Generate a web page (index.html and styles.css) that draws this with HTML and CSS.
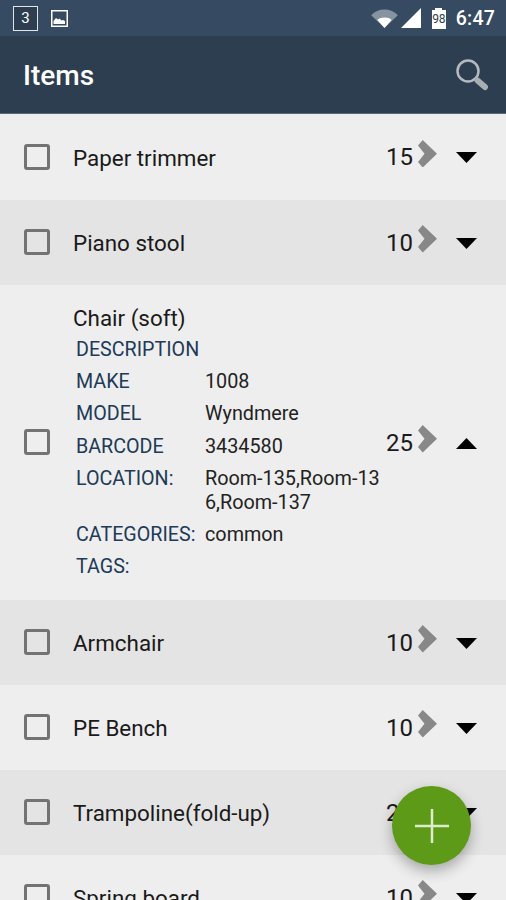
FILE: index.html
```html
<!DOCTYPE html>
<html lang="en">
<head>
<meta charset="utf-8">
<title>Items</title>
<link rel="stylesheet" href="styles.css">
</head>
<body>
<div class="screen">
  <div class="status">
    <div class="status-left">
      <span class="badge">3</span>
      <svg class="pic" viewBox="0 0 17 17"><rect x="0.75" y="0.75" width="15.5" height="15.5" fill="none" stroke="#fff" stroke-width="1.5"/><path d="M2.5 14v-3l2.5-3 2 1.5 1.5-1 2 2 1.5-.5 2 1V14z" fill="#fff"/></svg>
    </div>
    <div class="status-right">
      <svg class="wifi" viewBox="0 0 28 20"><path d="M0 6.5C3.5 2.5 8.5 0.5 14 0.5s10.500 2 14 6L14 20z" fill="#fff" opacity=".4"/><path d="M6.500 11.500C8.500 9.800 11 9 14 9s5.500.8 7.500 2.500L14 20z" fill="#fff"/></svg>
      <svg class="signal" viewBox="0 0 20 20"><path d="M20 0v20H0z" fill="#fff"/></svg>
      <span class="battery"><span class="battery-cap"></span><span class="battery-body">98</span></span>
      <span class="clock">6:47</span>
    </div>
  </div>
  <header class="bar">
    <h1 class="title">Items</h1>
    <svg class="search" viewBox="0 0 32 32"><circle cx="12" cy="12" r="10.500" fill="none" stroke="#b4babf" stroke-width="2.500"/><path d="M21.500 21.500l7.500 6.500" stroke="#a9aeb3" stroke-width="6" stroke-linecap="round"/></svg>
  </header>
  <main class="list">
    <div class="row">
      <span class="check"></span><div class="body"><div class="name">Paper trimmer</div></div>
      <span class="count">15</span><svg class="chev" viewBox="0 0 19 27.500"><path d="M0 5.500L4.700 0 19 13.750 4.700 27.500 0 22l6.500-8.250z" fill="#888"/></svg>
      <svg class="tri" viewBox="0 0 21 11"><path d="M0 0h21L10.500 11z"/></svg>
    </div>
    <div class="row alt">
      <span class="check"></span><div class="body"><div class="name">Piano stool</div></div>
      <span class="count">10</span><svg class="chev" viewBox="0 0 19 27.500"><path d="M0 5.500L4.700 0 19 13.750 4.700 27.500 0 22l6.500-8.250z" fill="#888"/></svg>
      <svg class="tri" viewBox="0 0 21 11"><path d="M0 0h21L10.500 11z"/></svg>
    </div>
    <div class="row open">
      <span class="check"></span>
      <div class="body">
        <div class="name">Chair (soft)</div>
        <dl class="details">
          <div class="d"><dt>DESCRIPTION</dt><dd></dd></div>
          <div class="d"><dt>MAKE</dt><dd>1008</dd></div>
          <div class="d"><dt>MODEL</dt><dd>Wyndmere</dd></div>
          <div class="d"><dt>BARCODE</dt><dd>3434580</dd></div>
          <div class="d"><dt>LOCATION:</dt><dd>Room-135,Room-13<br>6,Room-137</dd></div>
          <div class="d"><dt>CATEGORIES:</dt><dd>common</dd></div>
          <div class="d"><dt>TAGS:</dt><dd></dd></div>
        </dl>
      </div>
      <span class="count">25</span><svg class="chev" viewBox="0 0 19 27.500"><path d="M0 5.500L4.700 0 19 13.750 4.700 27.500 0 22l6.500-8.250z" fill="#888"/></svg>
      <svg class="tri" viewBox="0 0 21 11"><path d="M0 11h21L10.500 0z"/></svg>
    </div>
    <div class="row alt">
      <span class="check"></span><div class="body"><div class="name">Armchair</div></div>
      <span class="count">10</span><svg class="chev" viewBox="0 0 19 27.500"><path d="M0 5.500L4.700 0 19 13.750 4.700 27.500 0 22l6.500-8.250z" fill="#888"/></svg>
      <svg class="tri" viewBox="0 0 21 11"><path d="M0 0h21L10.500 11z"/></svg>
    </div>
    <div class="row">
      <span class="check"></span><div class="body"><div class="name">PE Bench</div></div>
      <span class="count">10</span><svg class="chev" viewBox="0 0 19 27.500"><path d="M0 5.500L4.700 0 19 13.750 4.700 27.500 0 22l6.500-8.250z" fill="#888"/></svg>
      <svg class="tri" viewBox="0 0 21 11"><path d="M0 0h21L10.500 11z"/></svg>
    </div>
    <div class="row alt">
      <span class="check"></span><div class="body"><div class="name">Trampoline(fold-up)</div></div>
      <span class="count">20</span><svg class="chev" viewBox="0 0 19 27.500"><path d="M0 5.500L4.700 0 19 13.750 4.700 27.500 0 22l6.500-8.250z" fill="#888"/></svg>
      <svg class="tri" viewBox="0 0 21 11"><path d="M0 0h21L10.500 11z"/></svg>
    </div>
    <div class="row">
      <span class="check"></span><div class="body"><div class="name">Spring board</div></div>
      <span class="count">10</span><svg class="chev" viewBox="0 0 19 27.500"><path d="M0 5.500L4.700 0 19 13.750 4.700 27.500 0 22l6.500-8.250z" fill="#888"/></svg>
      <svg class="tri" viewBox="0 0 21 11"><path d="M0 0h21L10.500 11z"/></svg>
    </div>
  </main>
  <button class="fab" aria-label="Add"><svg viewBox="0 0 34 34"><path d="M17 0v34M0 17h34" stroke="#dfeccb" stroke-width="2.500"/></svg></button>
</div>
</body>
</html>
```
FILE: styles.css
```css
* { box-sizing: border-box; }
html, body { margin: 0; padding: 0; }
body { font-family: Roboto, sans-serif; background: #eee; }
.screen { position: relative; width: 506px; height: 900px; overflow: hidden; }

.status { height: 36px; background: #364b62; display: flex; justify-content: space-between; align-items: center; padding: 0 11px 0 13px; color: #fff; }
.status-left { display: flex; align-items: center; gap: 13px; }
.badge { width: 25px; height: 25px; border: 1.500px solid #dfe4e8; background: #2d3e50; font-size: 15px; display: flex; align-items: center; justify-content: center; }
.pic { width: 17px; height: 17px; }
.status-right { display: flex; align-items: center; }
.wifi { width: 27px; height: 19px; margin-right: 3px; }
.signal { width: 20px; height: 20px; margin-right: 11px; }
.battery { display: flex; flex-direction: column; align-items: center; width: 14px; margin-right: 10px; }
.battery-cap { width: 7px; height: 2px; background: #fff; }
.battery-body { width: 14px; height: 19px; background: #fff; color: #2d3e50; font-size: 12px; line-height: 19px; text-align: center; letter-spacing: -.3px; }
.clock { font-size: 19.500px; font-weight: 500; letter-spacing: .2px; }

.bar { height: 78px; background: #2d3e50; border-bottom: 1px solid #5b6774; display: flex; align-items: center; justify-content: space-between; padding: 0 18px 0 23px; }
.title { margin: 2px 0 0; color: #fff; font-size: 28px; font-weight: 500; }
.search { width: 32px; height: 32px; }

.list { display: block; }
.row { display: flex; align-items: center; height: 85px; padding-left: 24px; background: #eee; color: #1a1a1a; }
.row:first-child { height: 86px; }
.row.alt { background: #e4e4e4; }
.row.open { height: 315px; }
.check { flex: none; width: 26px; height: 26px; border: 3px solid #737373; border-radius: 3px; margin: -.5px 23px 0 0; }
.body { flex: 1; min-width: 0; }
.name { font-size: 22.400px; line-height: 28px; margin-top: 1.500px; }
.row.open .name { margin-top: 6px; }
.details { margin: 6.500px 0 0 3px; font-size: 19.700px; line-height: 24px; }
.d { display: flex; margin-bottom: 8.200px; }
dt { width: 129px; flex: none; color: #203a58; }
dd { margin: 0; color: #222; width: 182px; font-size: 19.800px; }
.count { flex: none; font-size: 24px; width: 32px; }
.chev { flex: none; width: 19px; height: 27.500px; margin-top: -7px; }
.tri { flex: none; width: 21px; height: 11px; margin: 1px 29px 0 19px; }

.fab { position: absolute; left: 392px; top: 786px; width: 79px; height: 79px; border: 0; border-radius: 50%; background: #5c9a18; box-shadow: 0 6px 14px rgba(0,0,0,.3); display: flex; align-items: center; justify-content: center; padding: 0; }
.fab svg { width: 34px; height: 34px; }
```
